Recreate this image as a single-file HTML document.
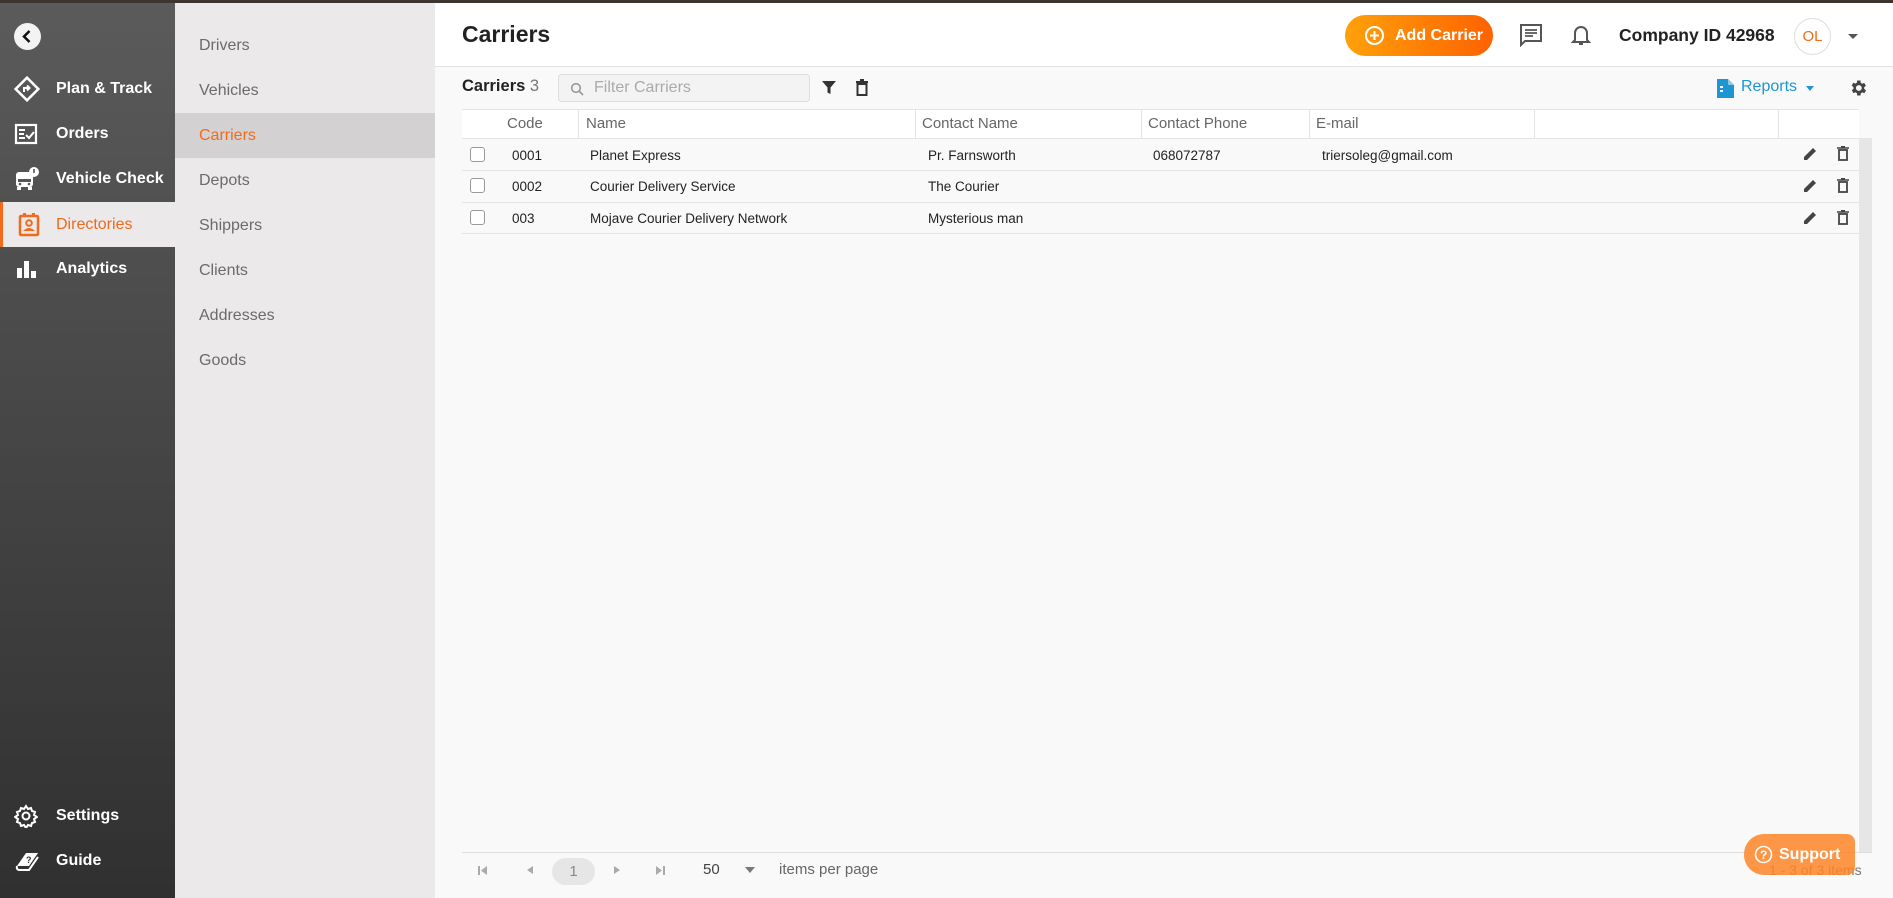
<!DOCTYPE html>
<html><head><meta charset="utf-8"><style>
*{box-sizing:border-box;margin:0;padding:0}
body{width:1893px;height:898px;overflow:hidden;font-family:"Liberation Sans",sans-serif;background:#f9f9f9;position:relative}
.topbar{position:absolute;left:0;top:0;width:1893px;height:3px;background:#3d3530;z-index:5}
.side{position:absolute;left:0;top:0;width:175px;height:898px;background:linear-gradient(#5b5b5b,#454545 50%,#303030)}
.side .it{position:absolute;left:0;width:175px;height:45px;display:flex;align-items:center;color:#fff;font-size:16px;font-weight:bold}
.side .it span{position:absolute;left:56px}
.side .it svg{position:absolute;left:14px}
.side .act{background:#ebe9ea;color:#f26a1b;border-left:3px solid #f26a1b}
.sub{position:absolute;left:175px;top:3px;width:260px;height:895px;background:#ebe9ea}
.sub div{position:absolute;left:0;width:260px;height:45px;line-height:45px;padding-left:24px;font-size:16px;color:#6b6b6b}
.sub .a{background:#d3d1d2;color:#f26a1b}
.head{position:absolute;left:435px;top:3px;width:1458px;height:64px;background:#fff;border-bottom:1px solid #e2e2e2}
.abs{position:absolute}
.hr{position:absolute;left:462px;width:1397px;height:1px;background:#e3e3e3}
.th{position:absolute;top:115px;font-size:15px;color:#666}
.td{position:absolute;font-size:13.5px;color:#222}
.cb{position:absolute;left:470px;width:15px;height:15px;border:1px solid #999;border-radius:3px;background:#fff}
</style></head><body>
<div class="topbar"></div>
<div class="side">
 <div class="abs" style="left:14px;top:23px;width:27px;height:27px;border-radius:50%;background:#f3f3f3"><svg width="27" height="27" viewBox="0 0 27 27"><path d="M15.5 8 L10 13.5 L15.5 19" stroke="#111" stroke-width="2.5" fill="none"/></svg></div>
 <div class="it" style="top:66px"><svg width="26" height="26" viewBox="0 0 26 26"><rect x="5" y="5" width="16" height="16" transform="rotate(45 13 13)" fill="none" stroke="#fff" stroke-width="2.5"/><path d="M10 16 V12 H15 M13 9.5 L15.5 12 L13 14.5" stroke="#fff" stroke-width="2" fill="none"/></svg><span>Plan &amp; Track</span></div>
 <div class="it" style="top:111px"><svg width="24" height="24" viewBox="0 0 24 24"><rect x="2" y="3" width="20" height="18" fill="none" stroke="#fff" stroke-width="2.2"/><path d="M5 8h6M5 12h5M5 16h6M12 13l3 3 5-6" stroke="#fff" stroke-width="2" fill="none"/></svg><span>Orders</span></div>
 <div class="it" style="top:156px"><svg width="26" height="26" viewBox="0 0 26 26"><rect x="2" y="6" width="17" height="15" rx="3" fill="#fff"/><rect x="4" y="13" width="13" height="3" fill="#555"/><circle cx="6" cy="18" r="1.3" fill="#555"/><circle cx="15" cy="18" r="1.3" fill="#555"/><rect x="3" y="21" width="4" height="3" fill="#fff"/><rect x="14" y="21" width="4" height="3" fill="#fff"/><circle cx="20" cy="6" r="5" fill="#fff"/><rect x="19.2" y="3" width="1.6" height="4" fill="#555"/></svg><span>Vehicle Check</span></div>
 <div class="it act" style="top:202px"><svg width="24" height="26" viewBox="0 0 24 26" style="left:14px"><rect x="3" y="4" width="18" height="19" rx="1" fill="none" stroke="#f26a1b" stroke-width="2.5"/><rect x="6" y="1" width="3" height="4" fill="#f26a1b"/><rect x="15" y="1" width="3" height="4" fill="#f26a1b"/><circle cx="12" cy="11" r="2.8" fill="none" stroke="#f26a1b" stroke-width="2"/><path d="M6 19 Q12 13 18 19 Z" fill="#f26a1b"/></svg><span style="font-weight:normal;left:53px">Directories</span></div>
 <div class="it" style="top:246px"><svg width="24" height="24" viewBox="0 0 24 24"><rect x="3" y="11" width="5" height="10" fill="#fff"/><rect x="10" y="4" width="5" height="17" fill="#fff"/><rect x="17" y="14" width="5" height="7" fill="#fff"/></svg><span>Analytics</span></div>
 <div class="it" style="top:793px"><svg width="24" height="24" viewBox="0 0 24 24"><path d="M12 2l2 3 3-1 1 3 3 1-1 3 3 2-3 2 1 3-3 1-1 3-3-1-2 3-2-3-3 1-1-3-3-1 1-3-3-2 3-2-1-3 3-1 1-3 3 1z" fill="none" stroke="#fff" stroke-width="2"/><circle cx="12" cy="12" r="3.5" fill="none" stroke="#fff" stroke-width="2"/></svg><span>Settings</span></div>
 <div class="it" style="top:838px"><svg width="26" height="24" viewBox="0 0 26 24"><path d="M3 17 L12 4 H24 L15 17 Z" fill="#fff"/><path d="M3 17 Q2 21 6 21 H15 L24 8" fill="none" stroke="#fff" stroke-width="2"/><text x="12" y="14" font-size="9" font-weight="bold" fill="#333" font-family="Liberation Sans">?</text></svg><span>Guide</span></div>
</div>
<div class="sub">
 <div style="top:20px">Drivers</div><div style="top:65px">Vehicles</div><div class="a" style="top:110px">Carriers</div><div style="top:155px">Depots</div><div style="top:200px">Shippers</div><div style="top:245px">Clients</div><div style="top:290px">Addresses</div><div style="top:335px">Goods</div>
</div>
<div class="head">
 <div class="abs" style="left:27px;top:18px;font-size:23px;font-weight:bold;color:#222">Carriers</div>
 <div class="abs" style="left:910px;top:12px;width:148px;height:41px;border-radius:21px;background:linear-gradient(90deg,#fea10a,#ff6200);color:#fff;font-size:16px;font-weight:bold;line-height:41px;padding-left:50px">Add Carrier<svg class="abs" style="left:19px;top:10px" width="21" height="21" viewBox="0 0 21 21"><circle cx="10.5" cy="10.5" r="8.5" fill="none" stroke="#fff" stroke-width="2"/><path d="M10.5 6v9M6 10.5h9" stroke="#fff" stroke-width="2"/></svg></div>
 <svg class="abs" style="left:1084px;top:20px" width="24" height="24" viewBox="0 0 24 24"><path d="M2 2h20v16H6l-4 4z" fill="none" stroke="#555" stroke-width="2"/><path d="M6 7h12M6 10h12M6 13h8" stroke="#555" stroke-width="1.8"/></svg>
 <svg class="abs" style="left:1136px;top:20px" width="20" height="24" viewBox="0 0 20 24"><path d="M4 17V10a6 6 0 0 1 12 0v7l2 2H2z" fill="none" stroke="#555" stroke-width="2"/><path d="M8 21h4" stroke="#555" stroke-width="2"/></svg>
 <div class="abs" style="left:1184px;top:22px;font-size:17.5px;font-weight:bold;color:#222">Company ID 42968</div>
 <div class="abs" style="left:1359px;top:15px;width:37px;height:37px;border-radius:50%;border:1px solid #ddd;color:#f26a1b;font-size:15px;text-align:center;line-height:35px">OL</div>
 <div class="abs" style="left:1413px;top:31px;border:5px solid transparent;border-top:5px solid #555"></div>
</div>
<div class="abs" style="left:462px;top:77px;font-size:16.5px;font-weight:bold;color:#222">Carriers <span style="font-weight:normal;color:#777">3</span></div>
<div class="abs" style="left:558px;top:74px;width:252px;height:28px;border:1px solid #ddd;border-radius:4px;background:#f3f3f3;color:#aaa;font-size:16px;line-height:26px;padding-left:35px">Filter Carriers<svg class="abs" style="left:11px;top:7px" width="14" height="14" viewBox="0 0 14 14"><circle cx="6" cy="6" r="4.3" fill="none" stroke="#999" stroke-width="1.6"/><path d="M9 9l4 4" stroke="#999" stroke-width="1.6"/></svg></div>
<svg class="abs" style="left:821px;top:80px" width="16" height="15" viewBox="0 0 16 15"><path d="M1 1h14l-5.5 6.5V14l-3-1.5V7.5z" fill="#333"/></svg>
<svg class="abs" style="left:855px;top:79px" width="14" height="17" viewBox="0 0 14 17"><path d="M1 3h12M5 1h4" stroke="#333" stroke-width="2"/><rect x="2.5" y="5" width="9" height="11" fill="none" stroke="#333" stroke-width="2"/></svg>
<svg class="abs" style="left:1717px;top:79px" width="17" height="19" viewBox="0 0 17 19"><path d="M0 0h11l6 6v13H0z" fill="#1d96d3"/><path d="M11 0v6h6" fill="#8cc9e8"/><rect x="3" y="7" width="3" height="2" fill="#fff"/><rect x="3" y="11" width="3" height="2" fill="#fff"/></svg>
<div class="abs" style="left:1741px;top:78px;font-size:16px;color:#1d96d3">Reports</div>
<div class="abs" style="left:1806px;top:86px;border:4.5px solid transparent;border-top:5px solid #1d96d3"></div>
<svg class="abs" style="left:1848px;top:78px" width="20" height="20" viewBox="0 0 24 24"><path d="M19.4 13a7.5 7.5 0 0 0 0-2l2.1-1.6-2-3.5-2.5 1a7.6 7.6 0 0 0-1.7-1L15 3h-4l-.4 2.7a7.6 7.6 0 0 0-1.7 1l-2.5-1-2 3.5L6.6 11a7.5 7.5 0 0 0 0 2l-2.1 1.6 2 3.5 2.5-1a7.6 7.6 0 0 0 1.7 1L11 21h4l.4-2.7a7.6 7.6 0 0 0 1.7-1l2.5 1 2-3.5zM13 15.5a3.5 3.5 0 1 1 0-7 3.5 3.5 0 0 1 0 7z" fill="#444"/></svg>
<div class="abs" style="left:462px;top:109px;width:1397px;height:29px;background:#fff"></div>
<div class="abs" style="left:1859px;top:138px;width:13px;height:714px;background:#e6e6e6"></div>
<div class="hr" style="top:109px"></div><div class="hr" style="top:138px"></div><div class="hr" style="top:170px"></div><div class="hr" style="top:202px"></div><div class="hr" style="top:233px"></div>
<div class="abs" style="left:578px;top:109px;width:1px;height:29px;background:#e3e3e3"></div>
<div class="abs" style="left:915px;top:109px;width:1px;height:29px;background:#e3e3e3"></div>
<div class="abs" style="left:1141px;top:109px;width:1px;height:29px;background:#e3e3e3"></div>
<div class="abs" style="left:1309px;top:109px;width:1px;height:29px;background:#e3e3e3"></div>
<div class="abs" style="left:1534px;top:109px;width:1px;height:29px;background:#e3e3e3"></div>
<div class="abs" style="left:1778px;top:109px;width:1px;height:29px;background:#e3e3e3"></div>
<div class="th" style="left:507px">Code</div><div class="th" style="left:586px">Name</div><div class="th" style="left:922px">Contact Name</div><div class="th" style="left:1148px">Contact Phone</div><div class="th" style="left:1316px">E-mail</div>
<div class="cb" style="top:147px"></div><div class="cb" style="top:178px"></div><div class="cb" style="top:210px"></div>
<div class="td" style="left:512px;top:148px">0001</div><div class="td" style="left:590px;top:148px">Planet Express</div><div class="td" style="left:928px;top:148px">Pr. Farnsworth</div><div class="td" style="left:1153px;top:148px">068072787</div><div class="td" style="left:1322px;top:148px">triersoleg@gmail.com</div>
<div class="td" style="left:512px;top:179px">0002</div><div class="td" style="left:590px;top:179px">Courier Delivery Service</div><div class="td" style="left:928px;top:179px">The Courier</div>
<div class="td" style="left:512px;top:211px">003</div><div class="td" style="left:590px;top:211px">Mojave Courier Delivery Network</div><div class="td" style="left:928px;top:211px">Mysterious man</div>
<svg class="abs" style="left:1803px;top:146px" width="15" height="15" viewBox="0 0 15 15"><path d="M1 14v-3L10 2l3 3-9 9z" fill="#444"/></svg>
<svg class="abs" style="left:1837px;top:146px" width="12" height="15" viewBox="0 0 12 15"><path d="M0 2h12M4 .7h4" stroke="#444" stroke-width="1.6"/><rect x="2" y="4" width="8" height="10" fill="none" stroke="#444" stroke-width="1.8"/></svg>
<svg class="abs" style="left:1803px;top:178px" width="15" height="15" viewBox="0 0 15 15"><path d="M1 14v-3L10 2l3 3-9 9z" fill="#444"/></svg>
<svg class="abs" style="left:1837px;top:178px" width="12" height="15" viewBox="0 0 12 15"><path d="M0 2h12M4 .7h4" stroke="#444" stroke-width="1.6"/><rect x="2" y="4" width="8" height="10" fill="none" stroke="#444" stroke-width="1.8"/></svg>
<svg class="abs" style="left:1803px;top:210px" width="15" height="15" viewBox="0 0 15 15"><path d="M1 14v-3L10 2l3 3-9 9z" fill="#444"/></svg>
<svg class="abs" style="left:1837px;top:210px" width="12" height="15" viewBox="0 0 12 15"><path d="M0 2h12M4 .7h4" stroke="#444" stroke-width="1.6"/><rect x="2" y="4" width="8" height="10" fill="none" stroke="#444" stroke-width="1.8"/></svg>
<div class="abs" style="left:462px;top:852px;width:1410px;height:1px;background:#ddd"></div>
<svg class="abs" style="left:478px;top:866px" width="9" height="9"><path d="M0 0h2v9H0z M9 0L3 4.5 9 9z" fill="#aaa"/></svg>
<div class="abs" style="left:523px;top:866px;border:4px solid transparent;border-right:6px solid #aaa;width:0"></div>
<div class="abs" style="left:552px;top:858px;width:43px;height:27px;border-radius:14px;background:#e6e6e6;color:#888;font-size:15px;text-align:center;line-height:27px">1</div>
<div class="abs" style="left:614px;top:866px;border:4px solid transparent;border-left:6px solid #aaa;width:0"></div>
<svg class="abs" style="left:656px;top:866px" width="9" height="9"><path d="M0 0l6 4.5L0 9z M7 0h2v9H7z" fill="#aaa"/></svg>
<div class="abs" style="left:703px;top:861px;font-size:15px;color:#444">50</div>
<div class="abs" style="left:745px;top:867px;border:5px solid transparent;border-top:6px solid #777"></div>
<div class="abs" style="left:779px;top:861px;font-size:15px;color:#666">items per page</div>
<div class="abs" style="left:1769px;top:862px;font-size:14px;color:#777">1 - 3 of 3 items</div>
<div class="abs" style="left:1744px;top:834px;width:111px;height:41px;border-radius:20px 8px 8px 20px;background:rgba(255,133,40,.85);color:#fff;font-size:16px;font-weight:bold;line-height:41px;padding-left:35px">Support<svg class="abs" style="left:10px;top:11px" width="19" height="19" viewBox="0 0 19 19"><circle cx="9.5" cy="9.5" r="8" fill="none" stroke="#fff" stroke-width="1.6"/><text x="6" y="14" font-size="12" fill="#fff" font-family="Liberation Sans">?</text></svg></div>
</body></html>
